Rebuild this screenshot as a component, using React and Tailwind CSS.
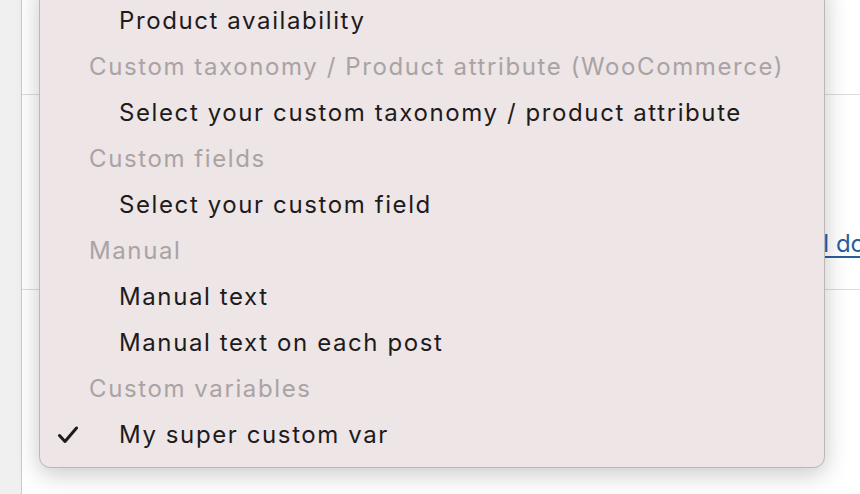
const groups = [
  { items: ['Product availability'] },
  { label: 'Custom taxonomy / Product attribute (WooCommerce)', items: ['Select your custom taxonomy / product attribute'] },
  { label: 'Custom fields', items: ['Select your custom field'] },
  { label: 'Manual', items: ['Manual text', 'Manual text on each post'] },
  { label: 'Custom variables', items: ['My super custom var'] },
];

const selected = 'My super custom var';

const App = () => {
  return (
    <div className="relative w-[860px] h-[494px] overflow-hidden bg-white font-['Inter',sans-serif]">
      {/* page behind the menu */}
      <div className="flex h-full">
        <div className="w-[22px] bg-[#f0f0f1] border-r border-[#c8c9cc]"></div>
        <div className="flex-1 flex flex-col">
          <div className="h-[95px] border-b border-[#dcdcde]"></div>
          <div className="h-[195px] border-b border-[#dcdcde] flex items-start justify-end pt-[137px]">
            <a href="#" className="text-[24px] leading-[24px] text-[#2a5d9c] underline underline-offset-[4px] -mr-[5px]">l do</a>
          </div>
          <div className="flex-1"></div>
        </div>
      </div>

      {/* dropdown menu */}
      <div className="absolute left-[39px] top-[-20px] w-[786px] pb-[9px] pt-[17px] bg-[#ede5e6] border border-[#bdb6b7] rounded-[11px] shadow-[0_6px_24px_rgba(0,0,0,0.22)] tracking-[1.6px]">
        {groups.map((g, gi) => (
          <div key={gi}>
            {g.label && (
              <div className="h-[46px] flex items-center pl-[49px] text-[24px] text-[#aaa3a4]">{g.label}</div>
            )}
            {g.items.map(item => (
              <div key={item} className="h-[46px] flex items-center text-[24px] text-[#1e1b1c]">
                <span className="w-[79px] pl-[17px] flex items-center">
                  {item === selected && (
                    <svg width="22" height="18" viewBox="0 0 22 18" fill="none">
                      <path d="M2.5 9.5 L8 15.5 L19.5 2" stroke="#1e1b1c" strokeWidth="3" strokeLinecap="round" strokeLinejoin="round" />
                    </svg>
                  )}
                </span>
                <span>{item}</span>
              </div>
            ))}
          </div>
        ))}
      </div>
    </div>
  );
};

export default App;
